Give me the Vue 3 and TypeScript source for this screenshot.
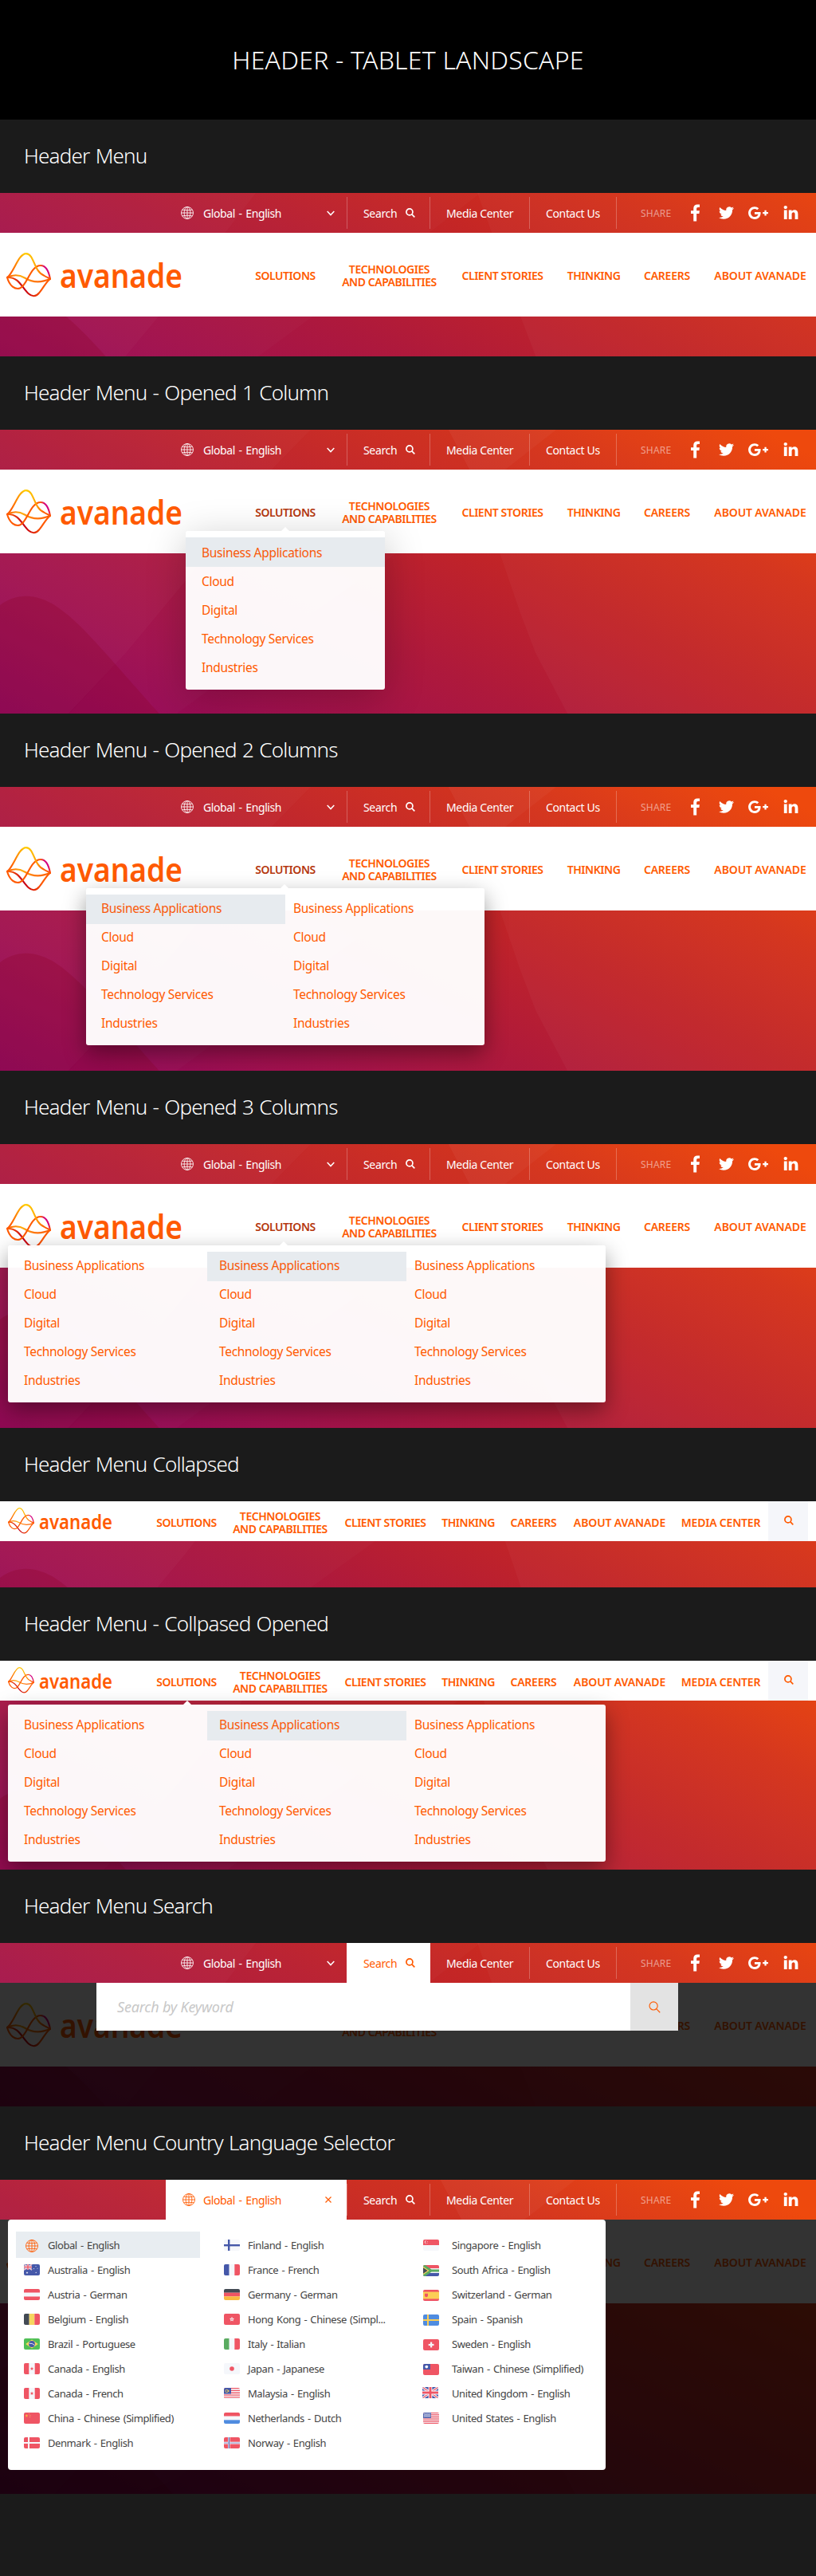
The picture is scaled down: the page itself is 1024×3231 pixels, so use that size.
<script setup lang="ts">
interface Column { items: string[]; active?: boolean; pad: number }
interface Section {
  title: string
  kind: 'full' | 'collapsed'
  height: number
  menu?: 'one' | 'two' | 'three' | 'low'
  columns?: Column[]
  activeNav?: boolean
  search?: boolean
  countries?: boolean
}
interface Country { name: string; flag: string; cls?: string }

const links = ['Business Applications', 'Cloud', 'Digital', 'Technology Services', 'Industries']
const three: Column[] = [
  { items: links, pad: 20 },
  { items: links, pad: 15, active: true },
  { items: links, pad: 10 },
]

const sections: Section[] = [
  { title: 'Header Menu', kind: 'full', height: 205 },
  { title: 'Header Menu - Opened 1 Column', kind: 'full', height: 356, menu: 'one', activeNav: true, columns: [{ items: links, pad: 20, active: true }] },
  { title: 'Header Menu - Opened 2 Columns', kind: 'full', height: 356, menu: 'two', activeNav: true, columns: [{ items: links, pad: 19, active: true }, { items: links, pad: 10 }] },
  { title: 'Header Menu - Opened 3 Columns', kind: 'full', height: 356, menu: 'three', activeNav: true, columns: three },
  { title: 'Header Menu Collapsed', kind: 'collapsed', height: 108 },
  { title: 'Header Menu - Collpased Opened', kind: 'collapsed', height: 262, menu: 'low', columns: three },
  { title: 'Header Menu Search', kind: 'full', height: 205, search: true },
  { title: 'Header Menu Country Language Selector', kind: 'full', height: 394, countries: true },
]

const nav = [
  { label: ['SOLUTIONS'], cls: 'n1' },
  { label: ['TECHNOLOGIES', 'AND CAPABILITIES'], cls: 'n2' },
  { label: ['CLIENT STORIES'], cls: 'n3' },
  { label: ['THINKING'], cls: 'n4' },
  { label: ['CAREERS'], cls: 'n5' },
  { label: ['ABOUT AVANADE'], cls: 'n6' },
]
const navCollapsed = [...nav, { label: ['MEDIA CENTER'], cls: 'n7' }]

const R = '#ef5564', B = '#4558a9', W = '#f5f7fb', Y = '#f6d65f', K = '#434a54', G = '#5aab61', L = '#4f8ce0'
const rect = (x: number, y: number, w: number, h: number, f: string) => `<rect x="${x}" y="${y}" width="${w}" height="${h}" fill="${f}"/>`
const rows = (...c: string[]) => c.map((f, i) => rect(0, (14 / c.length) * i, 20, 14 / c.length + 0.05, f)).join('')
const cols = (...c: string[]) => c.map((f, i) => rect((20 / c.length) * i, 0, 20 / c.length + 0.05, 14, f)).join('')
const star = (x: number, y: number, r: number, f: string) => {
  const p = Array.from({ length: 10 }, (_, i) => {
    const a = (Math.PI / 5) * i - Math.PI / 2
    const q = i % 2 ? r * 0.45 : r
    return `${(x + q * Math.cos(a)).toFixed(2)},${(y + q * Math.sin(a)).toFixed(2)}`
  }).join(' ')
  return `<polygon points="${p}" fill="${f}"/>`
}
const unionJack = (w: number, h: number) =>
  rect(0, 0, w, h, B) +
  `<path d="M0 0L${w} ${h}M${w} 0L0 ${h}" stroke="${W}" stroke-width="${h * 0.22}"/>` +
  `<path d="M0 0L${w} ${h}M${w} 0L0 ${h}" stroke="${R}" stroke-width="${h * 0.08}"/>` +
  rect(0, h * 0.32, w, h * 0.36, W) + rect(w * 0.38, 0, w * 0.24, h, W) +
  rect(0, h * 0.4, w, h * 0.2, R) + rect(w * 0.43, 0, w * 0.14, h, R)
const canada = rect(0, 0, 20, 14, W) + rect(0, 0, 6.3, 14, R) + rect(13.7, 0, 6.3, 14, R) + star(10, 7, 2.4, R)

const flags: Record<string, string> = {
  au: rect(0, 0, 20, 14, B) + unionJack(10, 7) + star(4, 10.6, 1.5, W) + star(12.5, 5.6, 0.8, W) + star(15, 2.6, 0.8, W) + star(17, 5.2, 0.8, W) + star(15.2, 10.4, 1, W),
  at: rect(0, 0, 20, 14, W) + rect(0, 0, 20, 4.5, R) + rect(0, 9.5, 20, 4.5, R),
  be: cols(K, Y, R),
  br: rect(0, 0, 20, 14, '#50c057') + `<polygon points="2.2,7 10,1.6 17.8,7 10,12.4" fill="${Y}"/><circle cx="10" cy="7" r="3.9" fill="${B}"/><path d="M6.6 6.2Q10.5 5.6 13.4 8.5" stroke="${W}" fill="none" stroke-width=".9"/>`,
  ca: canada,
  cn: rect(0, 0, 20, 14, R) + star(3.4, 4, 2.1, '#f9b83f') + star(6.6, 1.7, 0.7, Y) + star(7.9, 3.6, 0.7, Y) + star(7.6, 5.8, 0.7, Y),
  dk: rect(0, 0, 20, 14, R) + rect(5, 0, 2, 14, W) + rect(0, 6, 20, 2, W),
  fi: rect(0, 0, 20, 14, W) + rect(5, 0, 2.4, 14, B) + rect(0, 6, 20, 2.4, B),
  fr: cols(B, W, R),
  de: rows(K, R, '#f9b940'),
  hk: rect(0, 0, 20, 14, R) + star(10, 7, 3.2, W) + `<circle cx="10" cy="7" r=".8" fill="${R}"/>`,
  it: cols(G, W, R),
  jp: rect(0, 0, 20, 14, W) + `<circle cx="10" cy="7" r="2.8" fill="${R}"/>`,
  my: rows(R, W, R, W, R, W, R, W, R, W) + rect(0, 0, 9, 7.6, B) + `<circle cx="3.6" cy="4" r="1.7" fill="none" stroke="${Y}" stroke-width=".8"/>` + star(5.6, 4, 1.4, Y),
  nl: rows(R, W, L),
  no: rect(0, 0, 20, 14, R) + rect(5, 0, 2.6, 14, W) + rect(0, 5.7, 20, 2.8, W) + rect(5.8, 0, 1.1, 14, B) + rect(0, 6.6, 20, 1, '#8b97cb'),
  sg: rect(0, 0, 20, 14, W) + rect(0, 0, 20, 7, R) + `<path d="M3.6 1.4a1.9 1.9 0 0 0 0 3.6" stroke="${W}" fill="none" stroke-width=".9"/>` + star(5.3, 2.4, 0.6, W) + star(5.2, 4.3, 0.6, W),
  za: rect(0, 0, 20, 14, W) + rect(0, 0, 20, 4.2, R) + rect(0, 9.8, 20, 4.2, B) + rect(8, 4.2, 12, 5.6, W) + `<path d="M0 0H2.6L10.5 5.4H20V8.6H10.5L2.6 14H0z" fill="${G}"/><path d="M0 1.8L7.6 7 0 12.2z" fill="${Y}"/><path d="M0 3.2L5.6 7 0 10.8z" fill="${K}"/>`,
  es: rect(0, 0, 20, 14, R) + rect(0, 2.6, 20, 8.8, '#fcce55') + `<path d="M2 4.8h4v3q-2 3-4 0z" fill="${R}"/>`,
  se: rect(0, 0, 20, 14, L) + rect(5, 0, 2, 14, '#fcce55') + rect(0, 6, 20, 2, '#fcce55'),
  ch: rect(0, 0, 20, 14, R) + rect(9, 3.6, 2.2, 6.8, W) + rect(6.7, 5.9, 6.8, 2.2, W),
  tw: rect(0, 0, 20, 14, R) + rect(0, 0, 9, 7, B) + `<circle cx="4.3" cy="3.6" r="1.9" fill="${W}"/>`,
  gb: unionJack(20, 14),
  us: rect(0, 0, 20, 14, W) + Array.from({ length: 7 }, (_, i) => rect(0, i * 2.15, 20, 1.08, R)).join('') + rect(0, 0, 10, 7, B) +
    Array.from({ length: 15 }, (_, i) => rect(0.8 + (i % 5) * 1.9, 0.8 + Math.floor(i / 5) * 2, 1, 1, W)).join('') + Array.from({ length: 8 }, (_, i) => rect(1.8 + (i % 4) * 1.9, 1.8 + Math.floor(i / 4) * 2, 1, 1, W)).join(''),
}

const countries: Country[][] = [
  [
    { name: 'Global - English', flag: '', cls: 'current' },
    { name: 'Australia - English', flag: 'au' },
    { name: 'Austria - German', flag: 'at' },
    { name: 'Belgium - English', flag: 'be' },
    { name: 'Brazil - Portuguese', flag: 'br' },
    { name: 'Canada - English', flag: 'ca' },
    { name: 'Canada - French', flag: 'ca' },
    { name: 'China - Chinese (Simplified)', flag: 'cn' },
    { name: 'Denmark - English', flag: 'dk' },
  ],
  [
    { name: 'Finland - English', flag: 'fi' },
    { name: 'France - French', flag: 'fr' },
    { name: 'Germany - German', flag: 'de' },
    { name: 'Hong Kong - Chinese (Simpl...', flag: 'hk' },
    { name: 'Italy - Italian', flag: 'it' },
    { name: 'Japan - Japanese', flag: 'jp' },
    { name: 'Malaysia - English', flag: 'my' },
    { name: 'Netherlands - Dutch', flag: 'nl' },
    { name: 'Norway - English', flag: 'no' },
  ],
  [
    { name: 'Singapore - English', flag: 'sg' },
    { name: 'South Africa - English', flag: 'za', cls: 'low' },
    { name: 'Switzerland - German', flag: 'es', cls: 'low' },
    { name: 'Spain - Spanish', flag: 'se', cls: 'low' },
    { name: 'Sweden - English', flag: 'ch', cls: 'low' },
    { name: 'Taiwan - Chinese (Simplified)', flag: 'tw', cls: 'low' },
    { name: 'United Kingdom - English', flag: 'gb' },
    { name: 'United States - English', flag: 'us' },
  ],
]
</script>

<template>
  <div class="page">
    <svg class="sprite" width="0" height="0" aria-hidden="true">
      <defs>
        <linearGradient id="bgGrad" gradientUnits="userSpaceOnUse" x1="0" y1="378" x2="344" y2="-293">
          <stop offset="0" stop-color="#8b045f" />
          <stop offset=".2" stop-color="#a01050" />
          <stop offset=".4" stop-color="#ae193c" />
          <stop offset=".6" stop-color="#c12428" />
          <stop offset=".8" stop-color="#d43118" />
          <stop offset="1" stop-color="#ee4406" />
        </linearGradient>
        <linearGradient id="lgTop" gradientUnits="userSpaceOnUse" x1="0" y1="32" x2="56" y2="32">
          <stop offset=".1" stop-color="#ff5a00" /><stop offset=".42" stop-color="#ffcf00" />
          <stop offset=".62" stop-color="#ffb400" /><stop offset=".85" stop-color="#ff5a00" />
        </linearGradient>
        <linearGradient id="lgMid" gradientUnits="userSpaceOnUse" x1="0" y1="32" x2="56" y2="32">
          <stop offset="0" stop-color="#ff5a00" /><stop offset=".35" stop-color="#ffae10" /><stop offset=".6" stop-color="#ff7a10" /><stop offset="1" stop-color="#ff5a00" />
        </linearGradient>
        <linearGradient id="lgLoop" gradientUnits="userSpaceOnUse" x1="0" y1="32" x2="56" y2="32">
          <stop offset=".76" stop-color="#ff5a00" /><stop offset=".86" stop-color="#d4007f" /><stop offset=".94" stop-color="#d4007f" /><stop offset="1" stop-color="#ff5a00" />
        </linearGradient>
        <linearGradient id="lgLow" gradientUnits="userSpaceOnUse" x1="0" y1="32" x2="56" y2="32">
          <stop offset=".05" stop-color="#ff5a00" /><stop offset=".38" stop-color="#c4001a" /><stop offset=".55" stop-color="#d81508" /><stop offset=".8" stop-color="#ff5a00" />
        </linearGradient>
      </defs>
      <symbol id="art" viewBox="0 0 1024 400" preserveAspectRatio="xMidYMid slice">
        <rect width="1024" height="400" fill="url(#bgGrad)" />
        <path d="M0 0H411L390 22 341 72 232 213 158 302 86 378 66 400H0z" fill="#fff" fill-opacity=".04" />
        <path d="M411 0L390 22 341 72 232 213 158 302 66 400H170L222 378 325 302 393 252 538 148 600 100 589 72 551 0z" fill="#fff" fill-opacity=".02" />
        <path d="M551 0L589 72 600 100 617 147 653 252 672 302 712 378 723 400H1024V0z" fill="#fff" fill-opacity=".03" />
        <path d="M551 0L589 72 600 100 634 72 726 0z" fill="#fff" fill-opacity=".03" />
        <path d="M0 242C22 226 46 228 70 243C108 268 150 325 220 400H0z" fill="#8a0020" fill-opacity=".25" />
      </symbol>
      <symbol id="mark" viewBox="0 0 56 56">
        <g fill="none" stroke-width="2.1" stroke-linecap="round">
          <path stroke="url(#lgLow)" d="M1 31C16 30 20 45 28 51.500C32 55 37 55.500 41 50.500C46 45 50 36 55 32.800" />
          <path stroke="url(#lgMid)" d="M1 31C9 27 17 28 23 31.500C31 36.500 42 38.500 55 32.800" />
          <path stroke="url(#lgLoop)" d="M1 31C4 42 11 46.500 17 44.500C26 41.500 30 16 43 16C50 16 53.500 25 55 32.800" />
          <path stroke="url(#lgTop)" d="M1 31C9 26 15 1.100 24.700 1.100C35 1.100 34 23 47 28.500C50 30.500 53 31.500 55 32.800" />
        </g>
      </symbol>
      <symbol id="globe" viewBox="0 0 16 16">
        <g fill="none" stroke="currentColor" stroke-width=".85">
          <circle cx="8" cy="8" r="7.500" /><ellipse cx="8" cy="8" rx="3.900" ry="7.500" />
          <path d="M8 .5V15.500M.5 8H15.500M1.900 4.200Q8 5.400 14.100 4.200M1.900 11.800Q8 10.600 14.100 11.800" />
        </g>
      </symbol>
      <symbol id="glass" viewBox="0 0 12 12">
        <g fill="none" stroke="currentColor" stroke-width="1.700"><circle cx="4.900" cy="4.900" r="4" /><path d="M7.900 7.900L11.300 11.300" /></g>
      </symbol>
      <symbol id="glassThin" viewBox="0 0 16 16">
        <g fill="none" stroke="currentColor" stroke-width="1.200"><circle cx="6.500" cy="6.300" r="5.400" /><path d="M10.300 10.200L15.200 15.200" /></g>
      </symbol>
      <symbol id="fb" viewBox="479 0 864 1664"><path fill="currentColor" d="M1343 12v264h-157q-86 0-116 36t-30 108v189h293l-39 296h-254v759h-306v-759h-255v-296h255v-218q0-186 104-288.500t277-102.500q147 0 228 12z" /></symbol>
      <symbol id="tw" viewBox="0 2.200 24 19.600"><path fill="currentColor" d="M23.953 4.570a10 10 0 01-2.825.775 4.958 4.958 0 002.163-2.723c-.951.555-2.005.959-3.127 1.184a4.920 4.920 0 00-8.384 4.482C7.690 8.095 4.067 6.130 1.640 3.162a4.822 4.822 0 00-.666 2.475c0 1.710.870 3.213 2.188 4.096a4.904 4.904 0 01-2.228-.616v.060a4.923 4.923 0 003.946 4.827 4.996 4.996 0 01-2.212.085 4.936 4.936 0 004.604 3.417 9.867 9.867 0 01-6.102 2.105c-.390 0-.779-.023-1.170-.067a13.995 13.995 0 007.557 2.209c9.053 0 13.998-7.496 13.998-13.985 0-.210 0-.420-.015-.630A9.935 9.935 0 0024 4.590z" /></symbol>
      <symbol id="gp" viewBox="0 150 2304 1480"><path fill="currentColor" d="M1437 913q0 208-87 370.500t-248 254-369 91.500q-149 0-285-58t-234-156-156-234-58-285 58-285 156-234 234-156 285-58q286 0 491 192l-199 191q-117-113-292-113-123 0-227.500 62t-165.500 168.500-61 232.500 61 232.500 165.500 168.500 227.500 62q83 0 152.500-23t114.500-57.500 78.500-78.500 49-83 21.500-74h-416v-252h692q12 63 12 122zm867-122v210h-209v209h-210v-209h-209v-210h209v-209h210v209h209z" /></symbol>
      <symbol id="li" viewBox="0 148 1536 1468"><path fill="currentColor" d="M349 625v991h-330v-991h330zm21-306q1 73-50.500 122t-135.500 49h-2q-82 0-132-49t-50-122q0-74 51.500-122.500t134.500-48.500 133 48.500 51 122.500zm1166 729v568h-329v-530q0-105-40.500-164.500t-126.500-59.500q-63 0-105.500 34.500t-63.500 85.500q-11 30-11 81v553h-329q2-399 2-647t-1-296l-1-48h329v144h-2q20-32 41-56t56.500-52 87-43.500 114.500-15.500q171 0 275 113.500t104 332.500z" /></symbol>
    </svg>

    <header class="hero"><h1>HEADER - TABLET LANDSCAPE</h1></header>

    <template v-for="s in sections" :key="s.title">
      <h2 class="label">{{ s.title }}</h2>
      <section class="stage" :style="{ height: s.height + 'px' }">
        <svg class="backdrop"><use href="#art" /></svg>

        <div v-if="s.kind === 'full'" class="topbar">
          <div class="lang" :class="{ open: s.countries }">
            <svg class="i-globe"><use href="#globe" /></svg>
            <span>Global - English</span>
            <svg v-if="s.countries" class="i-close" viewBox="0 0 8 8"><path d="M.5.5l7 7M7.500.5l-7 7" stroke="currentColor" stroke-width="1.200" /></svg>
            <svg v-else class="i-chev" viewBox="0 0 10 7"><path d="M.7 1L5 5.600 9.300 1" fill="none" stroke="currentColor" stroke-width="1.500" /></svg>
          </div>
          <div class="tab find" :class="{ open: s.search }"><span>Search</span><svg class="i-glass"><use href="#glass" /></svg></div>
          <div class="tab media" :class="{ bare: s.search }"><span>Media Center</span></div>
          <div class="tab contact"><span>Contact Us</span></div>
          <div class="share">
            <span>SHARE</span>
            <svg class="s-fb"><use href="#fb" /></svg>
            <svg class="s-tw"><use href="#tw" /></svg>
            <svg class="s-gp"><use href="#gp" /></svg>
            <svg class="s-li"><use href="#li" /></svg>
          </div>
        </div>

        <div class="mainbar" :class="s.kind">
          <div class="logo">
            <svg class="mark"><use href="#mark" /></svg>
            <svg class="word" viewBox="0 0 154 40"><text x="0" y="33" textLength="154" lengthAdjust="spacingAndGlyphs">avanade</text></svg>
          </div>
          <nav>
            <a v-for="(n, i) in s.kind === 'full' ? nav : navCollapsed" :key="n.cls" :class="[n.cls, { active: s.activeNav && i === 0 }]">
              <span v-for="l in n.label" :key="l">{{ l }}</span>
            </a>
          </nav>
          <div v-if="s.kind === 'collapsed'" class="findbox"><svg class="i-glass"><use href="#glass" /></svg></div>
        </div>

        <div v-if="s.search || s.countries" class="dim"></div>

        <div v-if="s.menu" class="menu" :class="s.menu">
          <ul v-for="(c, i) in s.columns" :key="i" :class="{ active: c.active }">
            <li v-for="l in c.items" :key="l" :style="{ paddingLeft: c.pad + 'px' }">{{ l }}</li>
          </ul>
        </div>

        <div v-if="s.search" class="searchpanel">
          <em>Search by Keyword</em>
          <div class="go"><svg><use href="#glassThin" /></svg></div>
        </div>

        <div v-if="s.countries" class="picker">
          <ul v-for="(c, i) in countries" :key="i" :class="'c' + i">
            <li v-for="x in c" :key="x.name" :class="x.cls">
              <svg v-if="x.flag" class="flag" :class="x.flag" viewBox="0 0 20 14" v-html="flags[x.flag]"></svg>
              <svg v-else class="i-globe"><use href="#globe" /></svg>
              <span>{{ x.name }}</span>
            </li>
          </ul>
        </div>
      </section>
    </template>
  </div>
</template>

<style>
body { margin: 0; background: #1b1b1b; }
</style>

<style scoped>
.page { width: 1024px; height: 3231px; background: #1b1b1b; font-family: "Noto Sans", "Open Sans", sans-serif; overflow: hidden; }
.sprite { position: absolute; }
h1, h2, ul { margin: 0; padding: 0; list-style: none; }
svg { flex: none; display: block; }
span, em { white-space: nowrap; }

.hero { height: 150px; background: #000; display: flex; justify-content: center; }
.hero h1 { color: #fff; font-size: 32px; font-weight: 300; line-height: 44px; margin-top: 53px; letter-spacing: .2px; }
.label { height: 92px; box-sizing: border-box; padding: 27px 0 0 30px; color: #fff; font-size: 26px; font-weight: 300; line-height: 36px; letter-spacing: -.8px; word-spacing: 1.2px; white-space: nowrap; }

.stage { position: relative; overflow: hidden; display: flex; flex-direction: column; }
.backdrop { position: absolute; inset: 0; width: 100%; height: 100%; }

.topbar { position: relative; z-index: 3; height: 50px; flex: none; display: flex; color: #fff; font-size: 14px; line-height: 50px; }
.topbar span { letter-spacing: -.35px; position: relative; top: 1px; }
.lang { width: 227px; margin-left: 208px; display: flex; align-items: center; box-sizing: border-box; padding-left: 19px; }
.i-globe { width: 16px; height: 16px; }
.lang span { margin-left: 12px; width: 140px; letter-spacing: -.42px; word-spacing: 1.5px; }
.i-chev { width: 10px; height: 7px; margin-left: 15px; }
.i-close { width: 8px; height: 8px; margin-left: 13px; }
.open { background: #fff; color: #ff5a00; }
.lang.open { padding-left: 21px; }
.lang.open span { margin-left: 10px; }
.tab { position: relative; display: flex; align-items: center; box-sizing: border-box; padding-left: 21px; }
.tab::before, .share::before { content: ""; position: absolute; left: 0; top: 5px; width: 1px; height: 40px; background: rgba(255, 255, 255, .25); }
.tab.open::before, .bare::before { display: none; }
.find { width: 104px; }
.find.open { width: 105px; margin-right: -1px; }
.find span { width: 53px; }
.i-glass { width: 12px; height: 12px; }
.media { width: 125px; }
.contact { width: 109px; }
.share { position: relative; display: flex; align-items: center; width: 251px; }
.share span { margin-left: 31px; width: 63px; font-size: 12px; letter-spacing: .2px; color: rgba(255, 255, 255, .5); }
.s-fb { width: 11px; height: 22px; margin-right: 24px; }
.s-tw { width: 19px; height: 16px; margin-right: 18px; }
.s-gp { width: 25px; height: 16px; margin-right: 19px; }
.s-li { width: 19px; height: 17px; position: relative; top: -1px; }

.mainbar { position: relative; flex: none; background: #fff; display: flex; }
.mainbar.full { height: 105px; }
.mainbar.collapsed { height: 50px; }
.logo { display: flex; flex: none; }
.full .logo { width: 312px; }
.full .mark { width: 56px; height: 56px; margin: 25px 0 0 8px; }
.full .word { width: 154px; height: 40px; margin: 36px 0 0 11px; }
.collapsed .logo { width: 191px; }
.collapsed .mark { width: 33px; height: 33px; margin: 8px 0 0 10px; }
.collapsed .word { width: 92px; height: 24px; margin: 15px 0 0 6px; }
.word { overflow: visible; }
.word text { font: 600 41px "Noto Sans", "Open Sans", sans-serif; fill: #ff5a00; }
nav { display: flex; align-items: center; color: #ff5a00; font-size: 14px; font-weight: 600; line-height: 16px; }
nav a { display: flex; flex-direction: column; align-items: center; padding-top: 3px; flex: none; box-sizing: border-box; letter-spacing: -.45px; }
nav a.active { color: #b5380f; }
.n1 { width: 92px; }
.n2 { width: 169px; }
.n3 { width: 115px; }
.n4 { width: 114px; }
nav .n5 { width: 70px; letter-spacing: -.25px; }
nav .n6 { width: 152px; letter-spacing: -.12px; }
nav .n7 { width: 109px; letter-spacing: -.2px; }
.full .n6 { padding-left: 12px; }
.collapsed .n1 { width: 86px; }
.collapsed .n2 { width: 149px; }
.collapsed .n4 { width: 93px; }
.collapsed .n5 { width: 71px; }
.collapsed .n6 { width: 145px; }
.findbox { margin-left: auto; margin-right: 10px; width: 50px; background: #f5f6fa; color: #ff5a00; }
.findbox .i-glass { margin: 18px 0 0 20px; }

.dim { position: absolute; inset: 50px 0 0; background: rgba(0, 0, 0, .8); }

.menu { position: absolute; display: flex; height: 197px; box-sizing: border-box; padding-top: 8px; border-radius: 3px; background: rgba(255, 255, 255, .97); box-shadow: 0 10px 28px rgba(0, 0, 0, .4); }
.menu::before { content: ""; position: absolute; top: -5px; border: solid transparent; border-width: 0 5px 5px; border-bottom-color: #fff; }
.menu ul { width: 250px; }
.menu li { height: 36px; line-height: 35px; box-sizing: border-box; color: #ff5a00; font-size: 15.5px; letter-spacing: -.3px; white-space: nowrap; }
.menu ul.active li:first-child { height: 37px; margin-bottom: -1px; background: #e7ebef; color: #f9590a; }
.one { left: 233px; top: 127px; height: 199px; box-shadow: 0 10px 50px rgba(0, 0, 0, .22); }
.menu.one li { line-height: 38px; }
.one::before { left: 120px; }
.two { left: 108px; top: 127px; }
.two::before { left: 244px; }
.three { left: 10px; top: 127px; }
.three::before { left: 341px; }
.menu.one { height: 199px; box-shadow: 0 10px 50px rgba(0, 0, 0, .22); }
.menu.low { left: 10px; top: 55px; }
.menu.low::before { left: 220px; }

.searchpanel { position: absolute; z-index: 2; left: 121px; top: 50px; width: 730px; height: 60px; background: #fff; display: flex; justify-content: space-between; }
.searchpanel em { font-size: 18px; line-height: 61px; margin-left: 26px; color: #c8c8c8; letter-spacing: -.2px; }
.go { width: 60px; background: #e3e3e3; color: #ff5a00; display: flex; align-items: center; justify-content: center; }
.go svg { width: 15px; height: 15px; }

.picker { position: absolute; z-index: 2; left: 10px; top: 50px; width: 750px; height: 314px; box-sizing: border-box; padding: 16px 0 0 10px; display: flex; background: #fff; border-radius: 4px; color: #444; font-size: 13px; }
.picker li { height: 31px; display: flex; align-items: center; box-sizing: border-box; padding-left: 10px; }
.picker li.current { height: 33px; margin: -1px 0; background: #e8edf1; }
.current .i-globe { color: #ff5a00; margin: 2px 2px 0; }
.flag { width: 20px; height: 14px; border-radius: 2px; overflow: hidden; margin-top: 1px; }
.picker .low .flag { margin-top: 3px; }
.flag.gb { margin: -1px 1px 0 -1px; }
.picker span { margin-left: 10px; letter-spacing: -.42px; word-spacing: 1.2px; }
.c0 { width: 231px; margin-right: 20px; }
.c1 { width: 250px; }
.picker .c2 span { margin-left: 16px; }
</style>
